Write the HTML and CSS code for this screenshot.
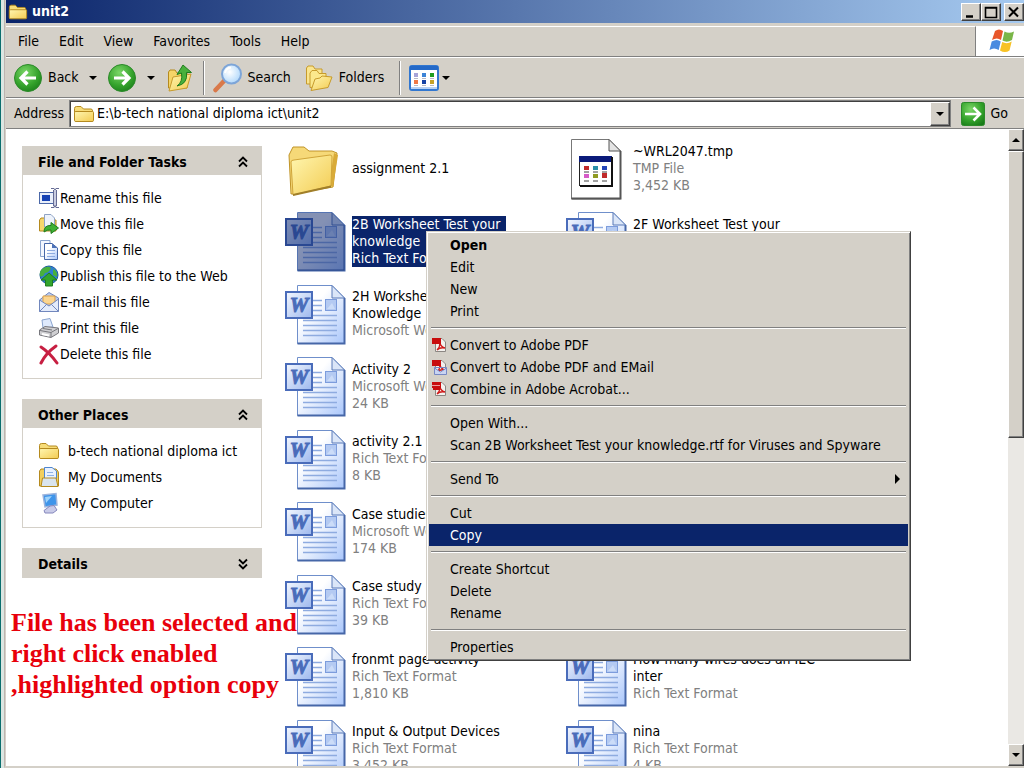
FILE: index.html
```html
<!DOCTYPE html>
<html lang="en">
<head>
<meta charset="UTF-8">
<meta name="viewport" content="width=device-width, initial-scale=1.0">
<link rel="stylesheet" href="styles.css">
<title>unit2</title>
</head>
<body>

<!-- shared icons -->
<svg class="defs" width="0" height="0" aria-hidden="true">
    <defs>
        <linearGradient id="gFolder" x1="0" y1="0" x2="1" y2="1">
            <stop offset="0" stop-color="#fff6b0"/>
            <stop offset="1" stop-color="#f3cb52"/>
        </linearGradient>
        <linearGradient id="gPage" x1="0" y1="0" x2="1" y2="1">
            <stop offset="0.35" stop-color="#ffffff"/>
            <stop offset="1" stop-color="#a9c6fb"/>
        </linearGradient>
        <linearGradient id="gWord" x1="0" y1="0" x2="1" y2="1">
            <stop offset="0" stop-color="#f4f8ff"/>
            <stop offset="1" stop-color="#9db8ee"/>
        </linearGradient>
        <radialGradient id="gGreen" cx="0.4" cy="0.3" r="0.8">
            <stop offset="0" stop-color="#7bd667"/>
            <stop offset="0.6" stop-color="#35a32c"/>
            <stop offset="1" stop-color="#187a18"/>
        </radialGradient>
        <radialGradient id="gLens" cx="0.4" cy="0.4" r="0.7">
            <stop offset="0" stop-color="#ffffff"/>
            <stop offset="1" stop-color="#a9d4fa"/>
        </radialGradient>
    </defs>
    <symbol id="i-folder" viewBox="0 0 22 18">
        <path d="M1.500 15V3.500Q1.500 1.500 3.500 1.500H8L10.500 4H18Q19.500 4 19.500 6V15z" fill="#f7dc78" stroke="#b58a1e"/>
        <path d="M1.500 15.500V7.500Q1.500 6.500 3 6.500H19.500Q20.500 6.500 20.500 7.500V15.500Q20.500 16.500 19 16.500H3Q1.500 16.500 1.500 15.500z" fill="url(#gFolder)" stroke="#b58a1e"/>
    </symbol>
    <symbol id="i-word" viewBox="0 -2 62 62">
        <path d="M12.500 0.500H47L59.500 13V58.500H12.500z" fill="url(#gPage)" stroke="#6f8fcb"/>
        <path d="M59.500 13V58.500H12.500" fill="none" stroke="#4667a8" stroke-width="2"/>
        <path d="M47 0.500V13H59.500z" fill="#dbe6f8" stroke="#5a7bb8"/>
        <path d="M28 15.500H37M28 20.500H37M28 25.500H37M18 35.500H52M18 40.500H52M18 45.500H52M18 50.500H52M28 30.500H52" stroke="#8eabe0" stroke-width="1.500"/>
        <rect x="40.500" y="14.500" width="11" height="11" fill="#b4caf2" stroke="#7c9cdc"/>
        <path d="M42 24L47 18L50 24z" fill="#cbdcf8"/>
        <path d="M12.500 0.500H47L59.500 13V58.500H12.500z" fill="currentColor"/>
        <rect x="1" y="7" width="26" height="26" fill="url(#gWord)" stroke="#4a6cba" stroke-width="2"/>
        <text x="14" y="27" text-anchor="middle" font-family="Liberation Serif, serif" font-size="21" font-weight="bold" font-style="italic" fill="#4a6cba" stroke="#4a6cba">W</text>
        <rect x="0" y="6" width="28" height="28" fill="currentColor"/>
    </symbol>
    <symbol id="i-up" viewBox="0 0 14 12">
        <path d="M3 5.500L7 1.500L11 5.500M3 10.500L7 6.500L11 10.500" fill="none" stroke="#000" stroke-width="1.800"/>
    </symbol>
    <symbol id="i-pdf" viewBox="0 0 16 16">
        <path d="M4.500 1.500H11L14.500 5V14.500H4.500z" fill="#f3f1ee" stroke="#8b8682"/>
        <path d="M6 13Q9 10 9 6Q10 10 14 11Q9 10 6 13z" fill="none" stroke="#d01818" stroke-width="1.300"/>
        <rect x="1" y="1" width="9" height="6" fill="#c80d0d"/>
    </symbol>
    <symbol id="i-arrow" viewBox="0 0 10 6">
        <path d="M1 1H9L5 5z" fill="#000"/>
    </symbol>
</svg>

<div class="window">
    <header class="title-bar">
        <svg class="title-icon"><use href="#i-folder"/></svg>
        <h1>unit2</h1>
        <button type="button" class="caption-btn" aria-label="Minimize"><svg viewBox="0 0 14 14"><path d="M2 11.500H9" stroke="#000" stroke-width="2.500"/></svg></button>
        <button type="button" class="caption-btn" aria-label="Maximize"><svg viewBox="0 0 14 14"><path d="M1.500 2.500H12.500V12.500H1.500zM1 3H13" fill="none" stroke="#000" stroke-width="1.600"/></svg></button>
        <button type="button" class="caption-btn close" aria-label="Close"><svg viewBox="0 0 14 14"><path d="M2 2.500L11 11.500M11 2.500L2 11.500" stroke="#000" stroke-width="2"/></svg></button>
    </header>

    <div class="menu-bar">
        <nav class="menus">
            <button type="button">File</button>
            <button type="button">Edit</button>
            <button type="button">View</button>
            <button type="button">Favorites</button>
            <button type="button">Tools</button>
            <button type="button">Help</button>
        </nav>
        <div class="flag">
            <svg viewBox="0 0 28 26">
                <path d="M6 3Q10 0 14 3L12 12Q8 9 3 12z" fill="#e8562a"/>
                <path d="M15.500 3.500Q20 6 25 3.500L23 12Q18 15 13.500 12.500z" fill="#7ab648"/>
                <path d="M2.700 13.500Q8 10.500 11.700 13.500L9.700 22Q5 19 0.500 22z" fill="#4a8be0"/>
                <path d="M13.200 14Q18 16.500 22.700 13.500L20.500 22.500Q16 25.500 11 22.500z" fill="#f8c224"/>
            </svg>
        </div>
    </div>

    <div class="toolbar">
        <button type="button" class="tool">
            <svg width="30" height="30" viewBox="0 0 30 30"><circle cx="15" cy="15" r="13.500" fill="url(#gGreen)" stroke="#2c8a2a"/><path d="M23 15H9M14.500 8.500L8 15L14.500 21.500" fill="none" stroke="#fff" stroke-width="3.200"/></svg>
            <span>Back</span>
        </button>
        <button type="button" class="drop" aria-label="Back history"><svg width="10" height="6"><use href="#i-arrow"/></svg></button>
        <button type="button" class="tool" aria-label="Forward">
            <svg width="30" height="30" viewBox="0 0 30 30"><circle cx="15" cy="15" r="13.500" fill="url(#gGreen)" stroke="#2c8a2a"/><path d="M7 15H21M15.500 8.500L22 15L15.500 21.500" fill="none" stroke="#fff" stroke-width="3.200"/></svg>
        </button>
        <button type="button" class="drop" aria-label="Forward history"><svg width="10" height="6"><use href="#i-arrow"/></svg></button>
        <button type="button" class="tool up" aria-label="Up">
            <svg width="26" height="28" viewBox="0 0 26 28"><path d="M1.500 24V8L3 6H8L10 9H20V24z" fill="#f5d468" stroke="#b58a1e"/><path d="M2 27L6 13L24 10L20 24z" fill="url(#gFolder)" stroke="#c79b2c"/><path d="M10 22Q16 18 14.500 9L10 10.500L16 1L24.500 8.500L19.500 8.500Q21 20 10 22z" fill="#48b03c" stroke="#1f7d1d"/></svg>
        </button>
        <span class="divider"></span>
        <button type="button" class="tool search">
            <svg width="30" height="30" viewBox="0 0 30 30"><path d="M11 18L2.500 27" stroke="#d9794a" stroke-width="4.500" stroke-linecap="round"/><circle cx="18.500" cy="11" r="9.500" fill="url(#gLens)" stroke="#7da5d8" stroke-width="2"/><path d="M12 10Q13 5 18 4.500" fill="none" stroke="#fff" stroke-width="2"/></svg>
            <span>Search</span>
        </button>
        <button type="button" class="tool folders">
            <svg width="28" height="28" viewBox="0 0 28 28"><path d="M1.500 20V4L3 2H8L10 5H17V20z" fill="#fae58e" stroke="#c79b2c"/><path d="M5 23.500V9L7 6.500H12L14 9.500H21V22z" fill="#fbe88c" stroke="#c79b2c"/><path d="M6 26.500L10 15L15 14L17 12L27 13L23 23.500z" fill="url(#gFolder)" stroke="#c79b2c"/></svg>
            <span>Folders</span>
        </button>
        <span class="divider"></span>
        <button type="button" class="tool views" aria-label="Views">
            <svg width="30" height="26" viewBox="0 0 30 26"><rect x="1" y="1" width="28" height="24" rx="2" fill="#fff" stroke="#3277d0" stroke-width="2"/><path d="M1 1H29V5H1z" fill="#2469c8"/><path d="M2 23H28" stroke="#b8d2f4" stroke-width="2"/><path d="M5 8H9V12H5z" fill="#a7a4d8"/><path d="M13 8H17V12H13z" fill="#3c83d6"/><path d="M21 8H25V12H21z" fill="#1f9d1f"/><path d="M5 15H9V19H5z" fill="#f07845"/><path d="M13 15H17V19H13z" fill="#1743a5"/><path d="M21 15H25V19H21z" fill="#c5a227"/><path d="M5 13.500H9M13 13.500H17M21 13.500H25M5 20.500H9M13 20.500H17M21 20.500H25" stroke="#b9b9c4"/></svg>
            <svg width="10" height="6"><use href="#i-arrow"/></svg>
        </button>
    </div>

    <form class="address-bar">
        <label for="address">Address</label>
        <div class="address-box">
            <svg width="22" height="18"><use href="#i-folder"/></svg>
            <input type="text" id="address" value="E:\b-tech national diploma ict\unit2">
            <button type="button" aria-label="Show addresses"><svg width="10" height="6"><use href="#i-arrow"/></svg></button>
        </div>
        <button type="button" class="go">
            <svg width="24" height="24" viewBox="0 0 24 24"><rect x="0.500" y="0.500" width="23" height="23" rx="2" fill="url(#gGreen)" stroke="#2c8a2a"/><path d="M4 12H19M12.500 5.500L19 12L12.500 18.500" fill="none" stroke="#fff" stroke-width="2.600"/></svg>
            <span>Go</span>
        </button>
    </form>

    <main class="content">
        <aside class="sidebar">
            <section class="panel">
                <h2>File and Folder Tasks <svg width="14" height="12"><use href="#i-up"/></svg></h2>
                <ul class="tasks">
                    <li><a href="#"><svg viewBox="0 0 22 22"><rect x="1.500" y="5.500" width="14" height="11" fill="#e9effa" stroke="#4b68a8"/><rect x="4" y="8" width="8" height="6" fill="#1743b4"/><path d="M13 1.500H16L17 3L18 1.500H21M13 20.500H16L17 19L18 20.500H21M15.500 3V19H18.500V3" fill="#c8cce0" stroke="#656b94"/></svg>Rename this file</a></li>
                    <li><a href="#"><svg viewBox="0 0 22 22"><path d="M1.500 18V7L3 5H7L9 7H18V18z" fill="#f6d76d" stroke="#b58a1e"/><path d="M6.500 1.500H13L16.500 5V14H6.500z" fill="#eef3fb" stroke="#8fa3c4"/><path d="M6 19Q6 12 13 12.500V9.500L20.500 15L13 20.500V17Q9 16.500 6 19z" fill="#3eb034" stroke="#1f7d1d"/></svg>Move this file</a></li>
                    <li><a href="#"><svg viewBox="0 0 22 22"><path d="M2.500 1.500H12V17.500H2.500z" fill="#f3f7fe" stroke="#8ba5cf"/><path d="M6.500 4.500H14L19.500 9V20.500H6.500z" fill="url(#gPage)" stroke="#4667a8"/><path d="M14 4.500V9H19.500z" fill="#4d72b8"/><path d="M9 11.500H17M9 14.500H17M9 17.500H17" stroke="#8eabe0"/></svg>Copy this file</a></li>
                    <li><a href="#"><svg viewBox="0 0 22 22"><circle cx="11" cy="10" r="9" fill="#2f7fd2" stroke="#205a9c"/><path d="M4 4Q10 0 13 3Q11 8 7 8Q5 13 2 11Q1 7 4 4zM15 4Q20 6 19 12L15 10z" fill="#48b03c"/><path d="M11 8L19 15H14.500V21H7.500V15H3z" fill="#32a52c" stroke="#1f7d1d"/></svg>Publish this file to the Web</a></li>
                    <li><a href="#"><svg viewBox="0 0 22 22"><path d="M1.500 9L11 1.500L20.500 7V20.500H1.500z" fill="#bccdf0" stroke="#7187bd"/><path d="M5 5H17V13H5z" fill="#fbd590" stroke="#dba14a"/><path d="M1.500 9L11 15L20.500 8V20.500H1.500z" fill="#e3ebfb" stroke="#7187bd"/><path d="M2 20L8.500 13.500M20 20L13.500 13.500" stroke="#7187bd"/></svg>E-mail this file</a></li>
                    <li><a href="#"><svg viewBox="0 0 22 22"><path d="M5 11L4 3L12 1.500L15 10z" fill="#dfeafd" stroke="#8ba5cf"/><path d="M1.500 13L7 9.500L20.500 11V16L13 20.500L1.500 18z" fill="#cfcfd2" stroke="#77777d"/><path d="M2 13.500L13 15.500L20 11.500M13 15.500V20M5 11.500L14 13" fill="none" stroke="#77777d"/><path d="M4 17L11 18.500" stroke="#fff" stroke-width="2"/></svg>Print this file</a></li>
                    <li><a href="#"><svg viewBox="0 0 22 22"><path d="M3 4Q12 10 19 20M18 3Q8 10 3 20" fill="none" stroke="#c71f42" stroke-width="3" stroke-linecap="round"/></svg>Delete this file</a></li>
                </ul>
            </section>

            <section class="panel">
                <h2>Other Places <svg width="14" height="12"><use href="#i-up"/></svg></h2>
                <ul class="tasks places">
                    <li><a href="#"><svg viewBox="0 0 22 18"><use href="#i-folder"/></svg>b-tech national diploma ict</a></li>
                    <li><a href="#"><svg viewBox="0 0 22 22"><path d="M1.500 20V5L3 3H18Q20.500 5 20.500 7V20z" fill="#f2cf5e" stroke="#b58a1e"/><path d="M6.500 1.500H14L18.500 5V15H6.500z" fill="#e8f1fe" stroke="#4f86cf"/><path d="M9 6.500H15M9 9.500H16" stroke="#8eb2e6"/><path d="M3 20.500L4.500 12H18L20 20.500z" fill="#d9e4ee" stroke="#b58a1e"/></svg>My Documents</a></li>
                    <li><a href="#"><svg viewBox="0 0 22 22"><path d="M5 3L18 1.500L19 13L7 15z" fill="#3f95ea" stroke="#9db4dc" stroke-width="1.500"/><path d="M7 5L14 4L8 11z" fill="#9fd3fb"/><path d="M12 14L16 13.500L19 18L15 21H7L6 18.500z" fill="#c9cbe8" stroke="#8688bd"/></svg>My Computer</a></li>
                </ul>
            </section>

            <section class="panel closed">
                <h2>Details <svg class="down" width="14" height="12"><use href="#i-up"/></svg></h2>
            </section>

            <p class="note">File has been selected and<br>right click enabled<br>,highlighted option copy</p>
        </aside>

        <ul class="files">
            <li>
                <svg class="file-icon" viewBox="0 -3 62 62"><path d="M6 53L4 14L8 6H19L24 10H47L52 12L48 46z" fill="#f6d978" stroke="#c09428"/><path d="M49 12L53 14L48 46L44 44z" fill="#d9ab38"/><path d="M8 54L6 21Q6 19 9 19L45 14Q47 14 47 16L46 45z" fill="url(#gFolder)" stroke="#d0a53a"/><path d="M8 54L46 45.500" stroke="#a17f2a" stroke-width="2"/></svg>
                <div class="file-text">assignment 2.1</div>
            </li>
            <li class="selected">
                <svg class="file-icon"><use href="#i-word"/></svg>
                <div class="file-text">2B Worksheet Test your knowledge<small>Rich Text Format</small></div>
            </li>
            <li>
                <svg class="file-icon"><use href="#i-word"/></svg>
                <div class="file-text">2H Worksheet Test your Knowledge<small>Microsoft Word</small></div>
            </li>
            <li>
                <svg class="file-icon"><use href="#i-word"/></svg>
                <div class="file-text">Activity 2<small>Microsoft Word</small><small>24 KB</small></div>
            </li>
            <li>
                <svg class="file-icon"><use href="#i-word"/></svg>
                <div class="file-text">activity 2.1<small>Rich Text Format</small><small>8 KB</small></div>
            </li>
            <li>
                <svg class="file-icon"><use href="#i-word"/></svg>
                <div class="file-text">Case studies<small>Microsoft Word</small><small>174 KB</small></div>
            </li>
            <li>
                <svg class="file-icon"><use href="#i-word"/></svg>
                <div class="file-text">Case study<small>Rich Text Format</small><small>39 KB</small></div>
            </li>
            <li>
                <svg class="file-icon"><use href="#i-word"/></svg>
                <div class="file-text">fronmt page activity<small>Rich Text Format</small><small>1,810 KB</small></div>
            </li>
            <li>
                <svg class="file-icon"><use href="#i-word"/></svg>
                <div class="file-text">Input &amp; Output Devices<small>Rich Text Format</small><small>3,452 KB</small></div>
            </li>
            <li>
                <svg class="file-icon" viewBox="0 -1 62 62"><path d="M5.500 0.500H43L54.500 12V60H5.500z" fill="#fff" stroke="#777"/><path d="M54.500 12V59.500H5.500" fill="none" stroke="#555" stroke-width="2"/><path d="M43 0.500V12H54.500z" fill="#e4e4e4" stroke="#555"/><rect x="13.500" y="17.500" width="32" height="29" fill="#fff" stroke="#222"/><path d="M13 17H46V23H13z" fill="#0a1a7a"/><path d="M46 18V47H14" fill="none" stroke="#111" stroke-width="2"/><path d="M18 27H23V31H18zM36 34H41V39H36z" fill="#c02a2a"/><path d="M27 27H32V31H27z" fill="#2a8fa8"/><path d="M36 27H41V31H36z" fill="#2446b8"/><path d="M18 35H23V39H18z" fill="#d65bc8"/><path d="M27 35H32V39H27z" fill="#8f9a22"/><path d="M18 33H23M27 33H32M36 33H41M18 42H23M27 42H32M36 42H41" stroke="#444"/></svg>
                <div class="file-text">~WRL2047.tmp<small>TMP File</small><small>3,452 KB</small></div>
            </li>
            <li>
                <svg class="file-icon"><use href="#i-word"/></svg>
                <div class="file-text">2F Worksheet Test your knowledge<small>Rich Text Format</small></div>
            </li>
            <li class="row-8">
                <svg class="file-icon"><use href="#i-word"/></svg>
                <div class="file-text wide">How many wires does an IEC inter<small>Rich Text Format</small></div>
            </li>
            <li class="row-9">
                <svg class="file-icon"><use href="#i-word"/></svg>
                <div class="file-text">nina<small>Rich Text Format</small><small>4 KB</small></div>
            </li>
        </ul>

        <div class="scrollbar">
            <button type="button" aria-label="Scroll up"><svg class="down" width="10" height="6"><use href="#i-arrow"/></svg></button>
            <div class="thumb"></div>
            <button type="button" class="end" aria-label="Scroll down"><svg width="10" height="6"><use href="#i-arrow"/></svg></button>
        </div>

        <div class="context-menu" role="menu">
            <button type="button" class="default">Open</button>
            <button type="button">Edit</button>
            <button type="button">New</button>
            <button type="button">Print</button>
            <hr>
            <button type="button"><svg><use href="#i-pdf"/></svg>Convert to Adobe PDF</button>
            <button type="button"><svg viewBox="0 0 16 16"><use href="#i-pdf"/><path d="M3.500 8.500H15.500V15.500H3.500zM3.500 9L9.500 13L15.500 9" fill="#c9d4f2" stroke="#7788c4"/></svg>Convert to Adobe PDF and EMail</button>
            <button type="button"><svg viewBox="0 0 16 16"><use href="#i-pdf"/><path d="M2 5H9V9H2z" fill="#c80d0d"/><path d="M1 4.500H9" stroke="#fff" stroke-width="0.600"/></svg>Combine in Adobe Acrobat...</button>
            <hr>
            <button type="button">Open With...</button>
            <button type="button">Scan 2B Worksheet Test your knowledge.rtf for Viruses and Spyware</button>
            <hr>
            <button type="button" class="submenu">Send To</button>
            <hr>
            <button type="button">Cut</button>
            <button type="button" class="active">Copy</button>
            <hr>
            <button type="button">Create Shortcut</button>
            <button type="button">Delete</button>
            <button type="button">Rename</button>
            <hr>
            <button type="button">Properties</button>
        </div>
    </main>
</div>

</body>
</html>
```
FILE: styles.css
```css
* {
    box-sizing: border-box;
}

body {
    margin: 0;
    height: 100vh;
    overflow: hidden;
    padding-left: 4px;
    background: linear-gradient(90deg, #0b6e6e 1px, #dce6e2 1px);
    font-family: "DejaVu Sans Condensed", "DejaVu Sans", sans-serif;
    font-size: 14px;
    line-height: 17px;
    color: #000;
}

.defs {
    position: absolute;
}

svg {
    display: block;
    flex: none;
}

button {
    font: inherit;
    color: inherit;
    background: none;
    border: none;
    padding: 0;
}

ul {
    list-style: none;
    margin: 0;
    padding: 0;
}

.window {
    display: flex;
    flex-direction: column;
    height: 100vh;
    background-color: #d4d0c8;
    border-left: 1px solid #bdb4b0;
    border-bottom: 2px solid #d4d0c8;
    padding-left: 1px;
}

/* title bar */
.title-bar {
    display: flex;
    align-items: center;
    height: 23px;
    padding-left: 2px;
    background: linear-gradient(90deg, #0a246a, #a6caf0);
}

.title-icon {
    width: 20px;
    height: 18px;
}

.title-bar h1 {
    flex: 1;
    margin: 0 0 0 4px;
    font-size: 14px;
    color: #fff;
}

.caption-btn,
.address-box button,
.scrollbar button,
.thumb {
    display: flex;
    align-items: center;
    justify-content: center;
    background-color: #d4d0c8;
    border: 1px solid;
    border-color: #fff #404040 #404040 #fff;
    box-shadow: inset -1px -1px #808080;
}

.caption-btn {
    width: 20px;
    height: 18px;
}

.caption-btn svg {
    width: 14px;
    height: 14px;
}

.caption-btn.close {
    margin-left: 3px;
}

/* menu bar */
.menu-bar {
    display: flex;
    height: 34px;
    padding-top: 3px;
    border-bottom: 1px solid #808080;
}

.menus {
    display: flex;
    flex: 1;
    gap: 20px;
    padding-left: 12px;
    border-top: 1px solid #fff;
    border-right: 1px solid #808080;
}

.flag {
    display: flex;
    align-items: center;
    width: 48px;
    padding-left: 13px;
    background-color: #fff;
}

.flag svg {
    width: 28px;
    height: 26px;
}

/* toolbar */
.toolbar {
    display: flex;
    align-items: center;
    height: 41px;
    padding-left: 7px;
    border-top: 1px solid #fff;
    border-bottom: 1px solid #808080;
}

.tool {
    display: flex;
    align-items: center;
    gap: 5px;
}

.drop {
    padding: 0 9px;
}

.up {
    margin-left: 2px;
}

.divider {
    width: 2px;
    height: 34px;
    margin: 0 8px 0 10px;
    border-left: 1px solid #808080;
    border-right: 1px solid #fff;
}

.folders {
    gap: 6px;
    margin-left: 14px;
}

.folders span {
    margin-right: 5px;
}

.views {
    gap: 2px;
}

/* address bar */
.address-bar {
    display: flex;
    align-items: center;
    height: 31px;
    padding-left: 8px;
    border-top: 1px solid #fff;
    border-bottom: 1px solid #808080;
}

.address-box {
    display: flex;
    align-items: center;
    flex: 1;
    height: 27px;
    margin: 0 10px 0 5px;
    padding-left: 3px;
    background-color: #fff;
    border: 1px solid #808080;
    box-shadow: inset 1px 1px #404040;
}

.address-box input {
    flex: 1;
    min-width: 0;
    padding: 0 2px;
    border: none;
    outline: none;
    font: inherit;
    background: none;
}

.address-box button {
    width: 20px;
    height: 24px;
}

.go {
    display: flex;
    align-items: center;
    gap: 6px;
    padding-right: 16px;
}

/* content */
.content {
    position: relative;
    display: flex;
    flex: 1;
    min-height: 0;
    overflow: hidden;
    background-color: #fff;
}

.sidebar {
    flex: none;
    width: 256px;
    padding: 17px 0 0 16px;
}

.panel {
    margin-bottom: 20px;
    border: 1px solid #d4d0c8;
}

.panel h2 {
    display: flex;
    align-items: center;
    justify-content: space-between;
    height: 28px;
    margin: 0;
    padding: 2px 11px 0 15px;
    background-color: #d4d0c8;
    font-size: 14px;
}

.down {
    transform: rotate(180deg);
}

.tasks {
    padding: 10px 0 11px 15px;
}

.tasks a {
    display: flex;
    align-items: center;
    height: 26px;
    color: #000;
    text-decoration: none;
}

.tasks svg {
    width: 22px;
    height: 22px;
}

.places a {
    gap: 8px;
}

.note {
    margin: 29px 0 0 -11px;
    font-family: "Liberation Serif", serif;
    font-size: 26px;
    font-weight: bold;
    line-height: 31px;
    white-space: nowrap;
    color: #e8000b;
}

.files {
    display: grid;
    flex: 1;
    grid-template-rows: 73px 72px 73px 72px 73px 72px 73px 72px 73px;
    grid-auto-flow: column;
    grid-auto-columns: 281px;
    padding: 3px 0 0 23px;
}

.files li {
    display: flex;
    align-items: center;
    gap: 5px;
}

.row-8 {
    grid-row: 8;
}

.row-9 {
    grid-row: 9;
}

.file-icon {
    width: 62px;
    height: 62px;
    color: transparent;
}

.file-text {
    width: 154px;
}

.file-text.wide {
    width: 200px;
}

.file-text small {
    display: block;
    font-size: 14px;
    color: #808080;
}

.selected .file-icon {
    color: rgba(10, 36, 106, 0.5);
}

.selected .file-text,
.selected small {
    background-color: #0a246a;
    color: #fff;
}

/* scrollbar */
.scrollbar {
    display: flex;
    flex-direction: column;
    width: 16px;
    background-color: #eae8e4;
}

.scrollbar button {
    height: 22px;
}

.thumb {
    height: 45%;
}

.scrollbar .end {
    margin-top: auto;
}

/* right click menu */
.context-menu {
    position: absolute;
    left: 420px;
    top: 102px;
    width: 485px;
    padding: 2px;
    background-color: #d4d0c8;
    border: 1px solid;
    border-color: #d4d0c8 #404040 #404040 #d4d0c8;
    box-shadow: inset 1px 1px #fff, inset -1px -1px #808080;
}

.context-menu button {
    position: relative;
    display: block;
    width: 100%;
    height: 22px;
    padding-left: 21px;
    text-align: left;
    white-space: nowrap;
}

.context-menu svg {
    position: absolute;
    left: 2px;
    top: 3px;
    width: 16px;
    height: 16px;
}

.context-menu hr {
    height: 2px;
    margin: 5px 2px;
    border: none;
    border-top: 1px solid #808080;
    border-bottom: 1px solid #fff;
}

.context-menu .default {
    font-weight: bold;
}

.context-menu .active {
    background-color: #0a246a;
    color: #fff;
}

.context-menu .submenu::after {
    content: "";
    position: absolute;
    right: 8px;
    top: 6px;
    border: 5px solid transparent;
    border-left-color: #000;
    border-right: none;
}
```
